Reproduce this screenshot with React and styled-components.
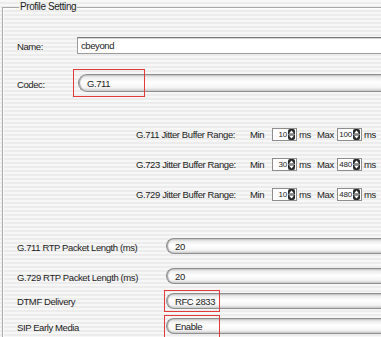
import React from "react";
import styled, { createGlobalStyle } from "styled-components";

const GlobalStyle = createGlobalStyle`
  html, body {
    margin: 0;
    padding: 0;
    height: 100%;
    overflow: hidden;
  }
  body {
    font-family: "Liberation Sans", Arial, sans-serif;
    font-size: 9.5px;
    letter-spacing: -0.4px;
    color: #222;
    background: repeating-linear-gradient(to bottom, #f7f7f7 0 2px, #ececec 2px 4px);
  }
`;

const Group = styled.fieldset`
  margin: 1px 0 0 2px;
  padding: 0 0 20px 14px;
  width: 440px;
  min-width: 0;
  border: 1px solid #a9a9a9;
  border-right: none;
  box-shadow: inset 1px 1px 0 #fdfdfd;
`;

const Legend = styled.legend`
  margin-left: 2px;
  padding: 0 1px;
  font-size: 10px;
  line-height: 12px;
  color: #222;
`;

const Row = styled.div`
  display: flex;
  align-items: center;
  height: ${(p) => p.$h}px;
  margin-top: ${(p) => p.$mt || 0}px;
  padding-left: ${(p) => p.$indent || 0}px;
`;

const Label = styled.span`
  flex: none;
  width: ${(p) => p.$w}px;
  padding-top: ${(p) => p.$drop || 0}px;
  white-space: nowrap;
`;

const TextBox = styled.div`
  flex: none;
  width: 360px;
  height: 17px;
  box-sizing: border-box;
  border: 1px solid #9b9b9b;
  border-top-color: #777;
  border-right: none;
  background: #fff;
  box-shadow: inset 0 1px 0 #d6d6d6;
  padding-left: 3px;
  display: flex;
  align-items: center;
`;

const Popup = styled.div`
  position: relative;
  flex: none;
  width: 360px;
  height: ${(p) => p.$h}px;
  box-sizing: border-box;
  border: 1px solid #8e8e8e;
  border-right: none;
  border-radius: 9px 0 0 9px;
  background: linear-gradient(
    to bottom,
    #bdbdbd 0,
    #ececec 2px,
    #ffffff 45%,
    #f4f4f4 80%,
    #c8c8c8 100%
  );
  box-shadow: inset 2px 0 1px -1px #9a9a9a;
  padding-left: 8px;
  display: flex;
  align-items: center;
`;

const Mark = styled.div`
  position: absolute;
  left: ${(p) => p.$l}px;
  top: ${(p) => p.$t}px;
  width: ${(p) => p.$w}px;
  height: ${(p) => p.$h}px;
  box-sizing: border-box;
  border: 1px solid #e2393b;
  pointer-events: none;
`;

const Word = styled.span`
  flex: none;
  width: ${(p) => p.$w}px;
  margin-left: ${(p) => p.$ml || 0}px;
`;

const Spin = styled.div`
  flex: none;
  width: 25px;
  height: 13px;
  box-sizing: border-box;
  border: 1px solid #8d8d8d;
  background: #fff;
  display: flex;
  align-items: center;
  justify-content: flex-end;
  gap: 1px;
  padding-right: 1px;
  font-size: 8px;
  letter-spacing: -0.2px;
`;

function Stepper() {
  return (
    <svg width="7" height="11" viewBox="0 0 7 11">
      <rect x="0" y="0" width="7" height="11" rx="2" fill="#2a2a2a" />
      <path d="M3.5 1.5 L6 4.5 L1 4.5 Z" fill="#fff" />
      <path d="M3.5 9.5 L6 6.5 L1 6.5 Z" fill="#fff" />
      <rect x="0" y="5" width="7" height="1" fill="#888" />
    </svg>
  );
}

function SpinBox({ value }) {
  return (
    <Spin>
      <span>{value}</span>
      <Stepper />
    </Spin>
  );
}

const jitter = [
  { codec: "G.711", min: 10, max: 100 },
  { codec: "G.723", min: 30, max: 480 },
  { codec: "G.729", min: 10, max: 480 },
];

export default function App() {
  return (
    <>
      <GlobalStyle />
      <Group>
        <Legend>Profile Setting</Legend>

        <Row $h={17} $mt={24}>
          <Label $w={60} $drop={1}>Name:</Label>
          <TextBox>cbeyond</TextBox>
        </Row>

        <Row $h={18} $mt={20}>
          <Label $w={61} $drop={2}>Codec:</Label>
          <Popup $h={18}>
            G.711
            <Mark $l={-6} $t={-6} $w={72} $h={28} />
          </Popup>
        </Row>

        {jitter.map((j, i) => (
          <Row key={j.codec} $h={30} $mt={i === 0 ? 27 : 0} $indent={119}>
            <Label $w={114}>{j.codec} Jitter Buffer Range:</Label>
            <Word $w={22}>Min</Word>
            <SpinBox value={j.min} />
            <Word $w={18} $ml={2}>ms</Word>
            <Word $w={20}>Max</Word>
            <SpinBox value={j.max} />
            <Word $w={18} $ml={2}>ms</Word>
          </Row>
        ))}

        <Row $h={16} $mt={29}>
          <Label $w={149} $drop={2}>G.711 RTP Packet Length (ms)</Label>
          <Popup $h={16}>20</Popup>
        </Row>

        <Row $h={16} $mt={14}>
          <Label $w={149} $drop={2}>G.729 RTP Packet Length (ms)</Label>
          <Popup $h={16}>20</Popup>
        </Row>

        <Row $h={16} $mt={9}>
          <Label $w={149}>DTMF Delivery</Label>
          <Popup $h={16}>
            RFC 2833
            <Mark $l={-3} $t={-4} $w={56} $h={22} />
          </Popup>
        </Row>

        <Row $h={16} $mt={9}>
          <Label $w={149} $drop={2}>SIP Early Media</Label>
          <Popup $h={16}>
            Enable
            <Mark $l={-3} $t={-4} $w={56} $h={24} />
          </Popup>
        </Row>
      </Group>
    </>
  );
}
